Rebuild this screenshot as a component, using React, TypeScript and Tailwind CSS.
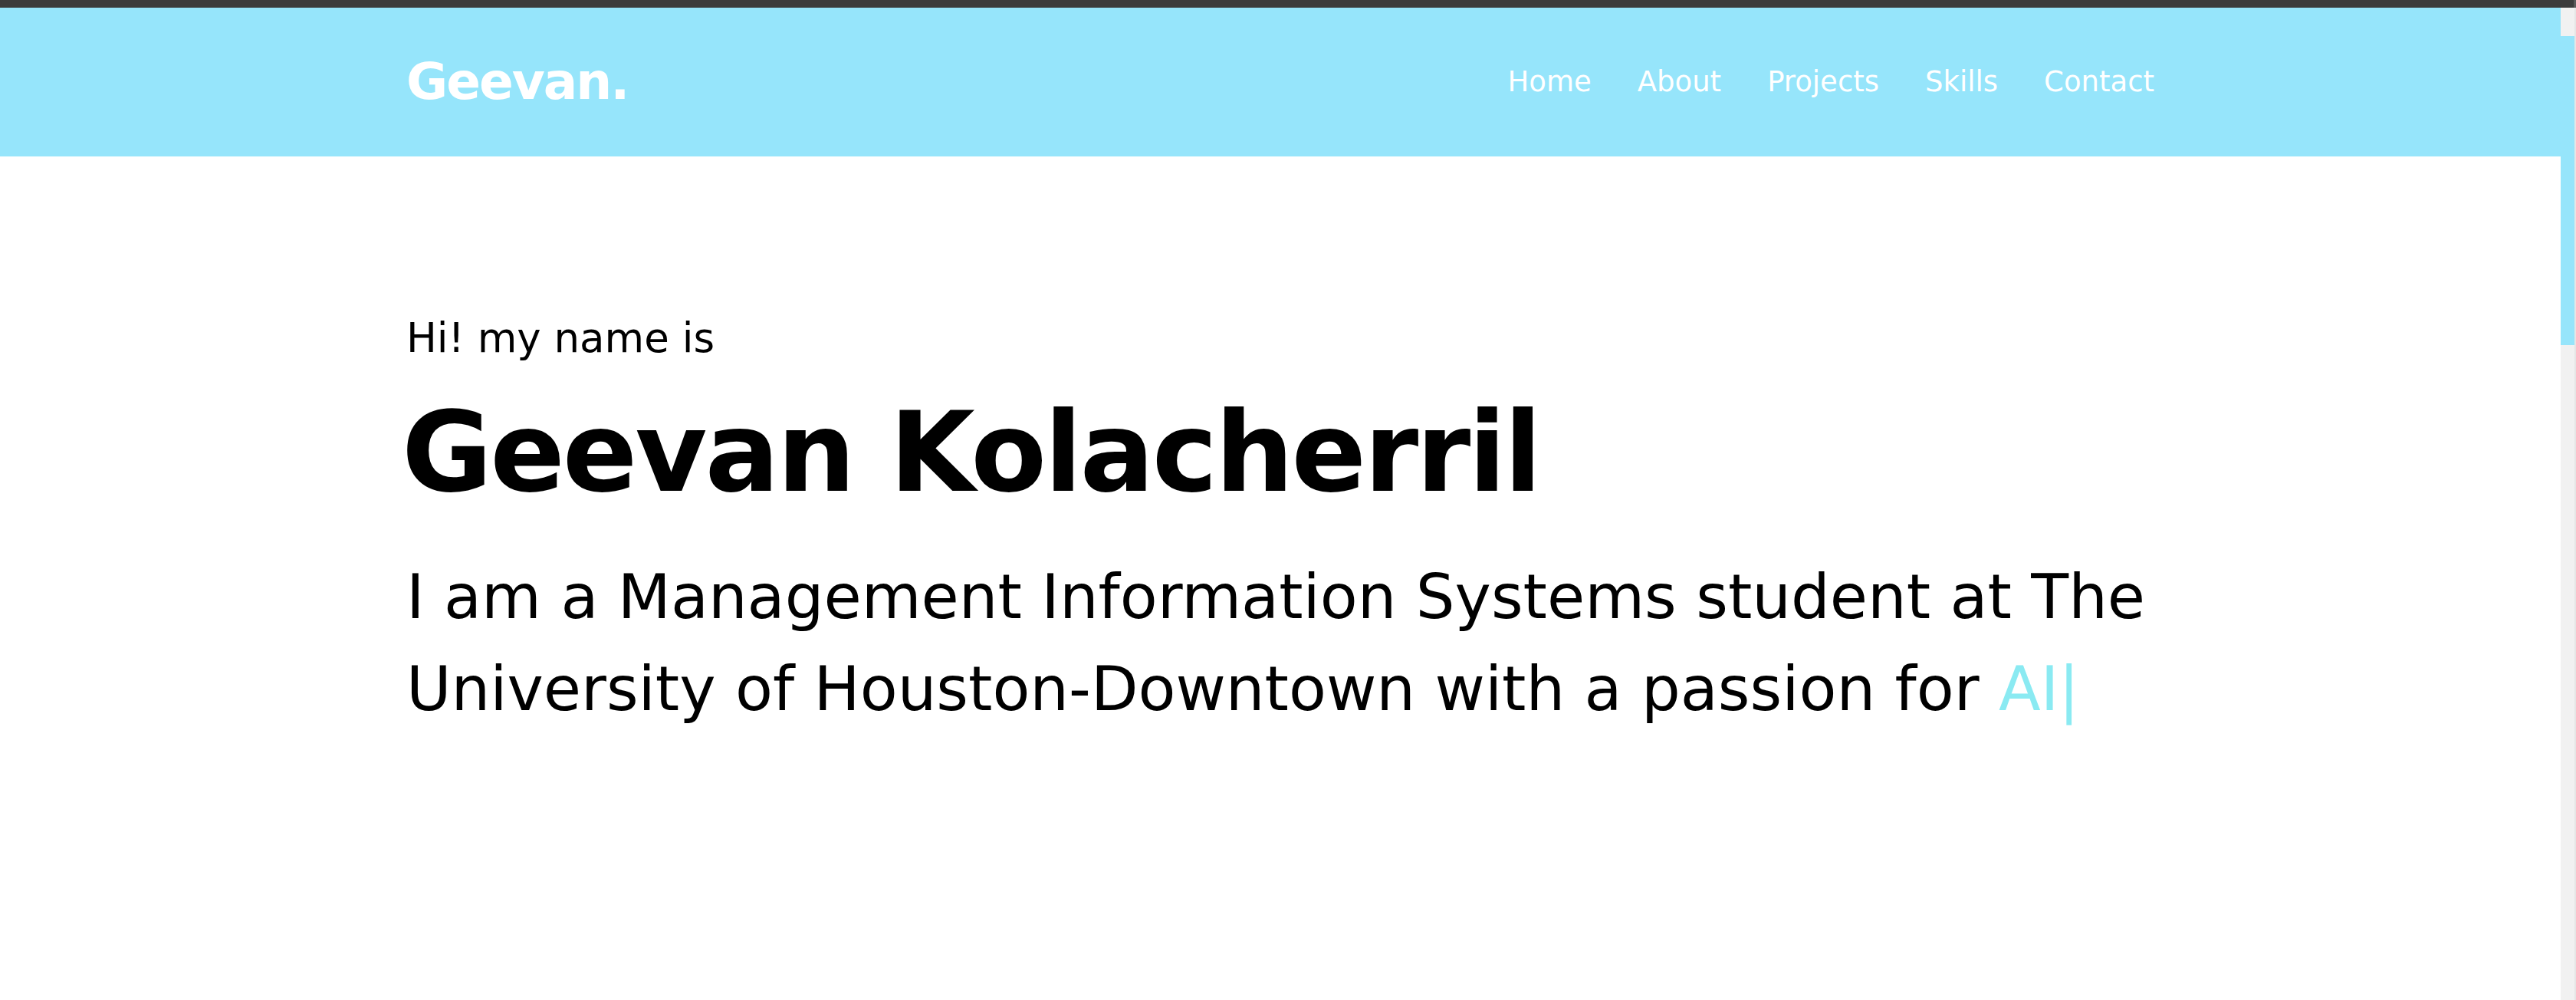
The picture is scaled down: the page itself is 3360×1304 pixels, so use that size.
const navLinks = ["Home", "About", "Projects", "Skills", "Contact"];

const font = { fontFamily: '"DejaVu Sans", "Noto Sans", sans-serif' };

export default function App() {
  return (
    <div className="flex h-screen flex-col overflow-hidden bg-white text-black" style={font}>
      {/* window top strip */}
      <div className="flex h-[10px] shrink-0 bg-[#3c3c3c]">
        <div className="flex-1" />
        <div className="w-[3px] bg-[#5a5a5a]" />
      </div>

      <div className="flex min-h-0 flex-1">
        <div className="flex min-w-0 flex-1 flex-col">
          <header className="h-[194px] shrink-0 bg-[#96e5fb]">
            <nav className="mx-auto flex h-full max-w-[2280px] items-center justify-between">
              <a href="#" className="text-[66px] font-bold leading-none tracking-[-2px] text-white">
                Geevan.
              </a>
              <ul className="flex items-center gap-[60px]">
                {navLinks.map((link) => (
                  <li key={link}>
                    <a href="#" className="text-[37px] leading-none text-white">
                      {link}
                    </a>
                  </li>
                ))}
              </ul>
            </nav>
          </header>

          <main className="mx-auto w-full max-w-[2280px] pt-[205px]">
            <p className="w-fit text-[53px] leading-[1.2]">Hi! my name is</p>
            <h1 className="mt-[30px] ml-[-6px] w-fit text-[144px] font-bold leading-[1.22] tracking-[-3px]">
              Geevan Kolacherril
            </h1>
            <p className="mt-[41px] text-[80px] leading-[120px]">
              <span className="block">I am a Management Information Systems student at The</span>
              <span className="flex">
                <span>University of Houston-Downtown with a passion for&nbsp;</span>
                <span className="text-[#8aeaf2]">AI|</span>
              </span>
            </p>
          </main>
        </div>

        {/* scrollbar */}
        <div className="flex w-[20px] shrink-0">
          <div className="flex w-[18px] flex-col bg-[#f1f1f1]">
            <div className="h-[37px]" />
            <div className="h-[403px] bg-[#96e5fb]" />
          </div>
          <div className="w-[2px] bg-[#e6e6e6]" />
        </div>
      </div>
    </div>
  );
}
